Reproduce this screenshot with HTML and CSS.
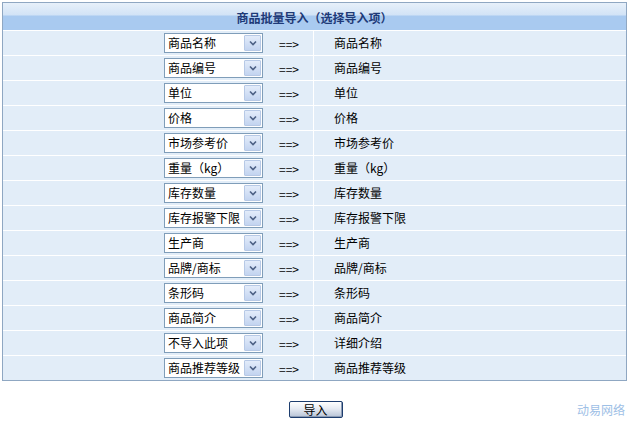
FILE: index.html
```html
<!DOCTYPE html>
<html lang="zh-CN">
<head>
<meta charset="utf-8">
<title>商品批量导入</title>
<link rel="stylesheet" href="styles.css">
</head>
<body>
<div class="page">
  <div class="grid">
    <div class="caption">商品批量导入（选择导入项）</div>
    <div class="row"><div class="pick"><span class="combo"><span class="combo-text">商品名称</span><span class="combo-btn"><svg viewBox="0 0 8 6" width="8" height="6"><path d="M1 1.5 L4 4.5 L7 1.5" fill="none" stroke="#4d6185" stroke-width="1.6"/></svg></span></span><span class="arrow">==&gt;</span></div><div class="target">商品名称</div></div>
    <div class="row"><div class="pick"><span class="combo"><span class="combo-text">商品编号</span><span class="combo-btn"><svg viewBox="0 0 8 6" width="8" height="6"><path d="M1 1.5 L4 4.5 L7 1.5" fill="none" stroke="#4d6185" stroke-width="1.6"/></svg></span></span><span class="arrow">==&gt;</span></div><div class="target">商品编号</div></div>
    <div class="row"><div class="pick"><span class="combo"><span class="combo-text">单位</span><span class="combo-btn"><svg viewBox="0 0 8 6" width="8" height="6"><path d="M1 1.5 L4 4.5 L7 1.5" fill="none" stroke="#4d6185" stroke-width="1.6"/></svg></span></span><span class="arrow">==&gt;</span></div><div class="target">单位</div></div>
    <div class="row"><div class="pick"><span class="combo"><span class="combo-text">价格</span><span class="combo-btn"><svg viewBox="0 0 8 6" width="8" height="6"><path d="M1 1.5 L4 4.5 L7 1.5" fill="none" stroke="#4d6185" stroke-width="1.6"/></svg></span></span><span class="arrow">==&gt;</span></div><div class="target">价格</div></div>
    <div class="row"><div class="pick"><span class="combo"><span class="combo-text">市场参考价</span><span class="combo-btn"><svg viewBox="0 0 8 6" width="8" height="6"><path d="M1 1.5 L4 4.5 L7 1.5" fill="none" stroke="#4d6185" stroke-width="1.6"/></svg></span></span><span class="arrow">==&gt;</span></div><div class="target">市场参考价</div></div>
    <div class="row"><div class="pick"><span class="combo"><span class="combo-text">重量（kg）</span><span class="combo-btn"><svg viewBox="0 0 8 6" width="8" height="6"><path d="M1 1.5 L4 4.5 L7 1.5" fill="none" stroke="#4d6185" stroke-width="1.6"/></svg></span></span><span class="arrow">==&gt;</span></div><div class="target">重量（kg）</div></div>
    <div class="row"><div class="pick"><span class="combo"><span class="combo-text">库存数量</span><span class="combo-btn"><svg viewBox="0 0 8 6" width="8" height="6"><path d="M1 1.5 L4 4.5 L7 1.5" fill="none" stroke="#4d6185" stroke-width="1.6"/></svg></span></span><span class="arrow">==&gt;</span></div><div class="target">库存数量</div></div>
    <div class="row"><div class="pick"><span class="combo"><span class="combo-text">库存报警下限</span><span class="combo-btn"><svg viewBox="0 0 8 6" width="8" height="6"><path d="M1 1.5 L4 4.5 L7 1.5" fill="none" stroke="#4d6185" stroke-width="1.6"/></svg></span></span><span class="arrow">==&gt;</span></div><div class="target">库存报警下限</div></div>
    <div class="row"><div class="pick"><span class="combo"><span class="combo-text">生产商</span><span class="combo-btn"><svg viewBox="0 0 8 6" width="8" height="6"><path d="M1 1.5 L4 4.5 L7 1.5" fill="none" stroke="#4d6185" stroke-width="1.6"/></svg></span></span><span class="arrow">==&gt;</span></div><div class="target">生产商</div></div>
    <div class="row"><div class="pick"><span class="combo"><span class="combo-text">品牌/商标</span><span class="combo-btn"><svg viewBox="0 0 8 6" width="8" height="6"><path d="M1 1.5 L4 4.5 L7 1.5" fill="none" stroke="#4d6185" stroke-width="1.6"/></svg></span></span><span class="arrow">==&gt;</span></div><div class="target">品牌/商标</div></div>
    <div class="row"><div class="pick"><span class="combo"><span class="combo-text">条形码</span><span class="combo-btn"><svg viewBox="0 0 8 6" width="8" height="6"><path d="M1 1.5 L4 4.5 L7 1.5" fill="none" stroke="#4d6185" stroke-width="1.6"/></svg></span></span><span class="arrow">==&gt;</span></div><div class="target">条形码</div></div>
    <div class="row"><div class="pick"><span class="combo"><span class="combo-text">商品简介</span><span class="combo-btn"><svg viewBox="0 0 8 6" width="8" height="6"><path d="M1 1.5 L4 4.5 L7 1.5" fill="none" stroke="#4d6185" stroke-width="1.6"/></svg></span></span><span class="arrow">==&gt;</span></div><div class="target">商品简介</div></div>
    <div class="row"><div class="pick"><span class="combo"><span class="combo-text">不导入此项</span><span class="combo-btn"><svg viewBox="0 0 8 6" width="8" height="6"><path d="M1 1.5 L4 4.5 L7 1.5" fill="none" stroke="#4d6185" stroke-width="1.6"/></svg></span></span><span class="arrow">==&gt;</span></div><div class="target">详细介绍</div></div>
    <div class="row last"><div class="pick"><span class="combo"><span class="combo-text">商品推荐等级</span><span class="combo-btn"><svg viewBox="0 0 8 6" width="8" height="6"><path d="M1 1.5 L4 4.5 L7 1.5" fill="none" stroke="#4d6185" stroke-width="1.6"/></svg></span></span><span class="arrow">==&gt;</span></div><div class="target">商品推荐等级</div></div>
  </div>
  <div class="actions">
    <span class="spacer"></span>
    <button class="btn" type="button">导入</button>
    <span class="footer">动易网络</span>
  </div>
</div>
</body>
</html>
```
FILE: styles.css
```css
* { box-sizing: border-box; }

html, body {
  margin: 0;
  padding: 0;
  background: #ffffff;
}

body {
  font-family: "Noto Sans CJK SC", "Liberation Sans", sans-serif;
  font-size: 12px;
  color: #000000;
}

.page {
  padding: 2px 2px 0 2px;
  width: 629px;
}

.grid {
  width: 625px;
  border: 1px solid #8fa7c2;
  background: #e2edf8;
}

.caption {
  height: 28px;
  border-bottom: 1px solid #ffffff;
  background: linear-gradient(to bottom, #e7f0fa 0px, #d2e3f6 12px, #a9caf0 13px, #a9caf0 27px);
  color: #1e3a78;
  font-weight: bold;
  font-size: 12px;
  line-height: 27px;
  text-align: center;
  padding-top: 1px;
}

.row {
  display: flex;
  height: 25px;
  border-bottom: 1px solid #ffffff;
}

.row.last { border-bottom: 0; height: 24px; }

.pick {
  width: 311px;
  display: flex;
  align-items: center;
  padding-left: 161px;
  border-right: 1px solid #ffffff;
}

.combo {
  display: flex;
  align-items: stretch;
  width: 99px;
  height: 20px;
  border: 1px solid #7f9db9;
  background: #ffffff;
}

.combo-text {
  flex: 1;
  padding-left: 3px;
  line-height: 18px;
  font-size: 12px;
  white-space: nowrap;
  overflow: hidden;
}

.combo-btn {
  width: 17px;
  margin: 1px;
  border: 1px solid #b7c9e6;
  border-radius: 1px;
  background: linear-gradient(to bottom, #e3ecfa, #c3d4f0);
  display: flex;
  align-items: center;
  justify-content: center;
}

.combo-btn svg { display: block; }

.arrow {
  margin-left: 16px;
  font-size: 12px;
  line-height: 18px;
  padding-top: 2px;
}

.target {
  flex: 1;
  padding-left: 20px;
  line-height: 24px;
  font-size: 12px;
}

.actions {
  display: grid;
  grid-template-columns: 1fr auto 1fr;
  align-items: center;
  width: 625px;
  padding-top: 20px;
  padding-left: 2px;
}

.btn {
  width: 54px;
  height: 17px;
  padding: 0;
  border: 1px solid #1d3d6e;
  border-radius: 2px;
  background: linear-gradient(to bottom, #ffffff 0%, #e6ebf3 45%, #b7c3d6 100%);
  box-shadow: inset -1px -1px 0 #8b9bb4;
  font-family: "Noto Sans CJK SC", sans-serif;
  font-size: 12px;
  line-height: 15px;
  color: #000000;
}

.footer {
  justify-self: end;
  color: #9ec0e6;
  font-size: 12px;
  line-height: 15px;
  padding-right: 2px;
}
```
